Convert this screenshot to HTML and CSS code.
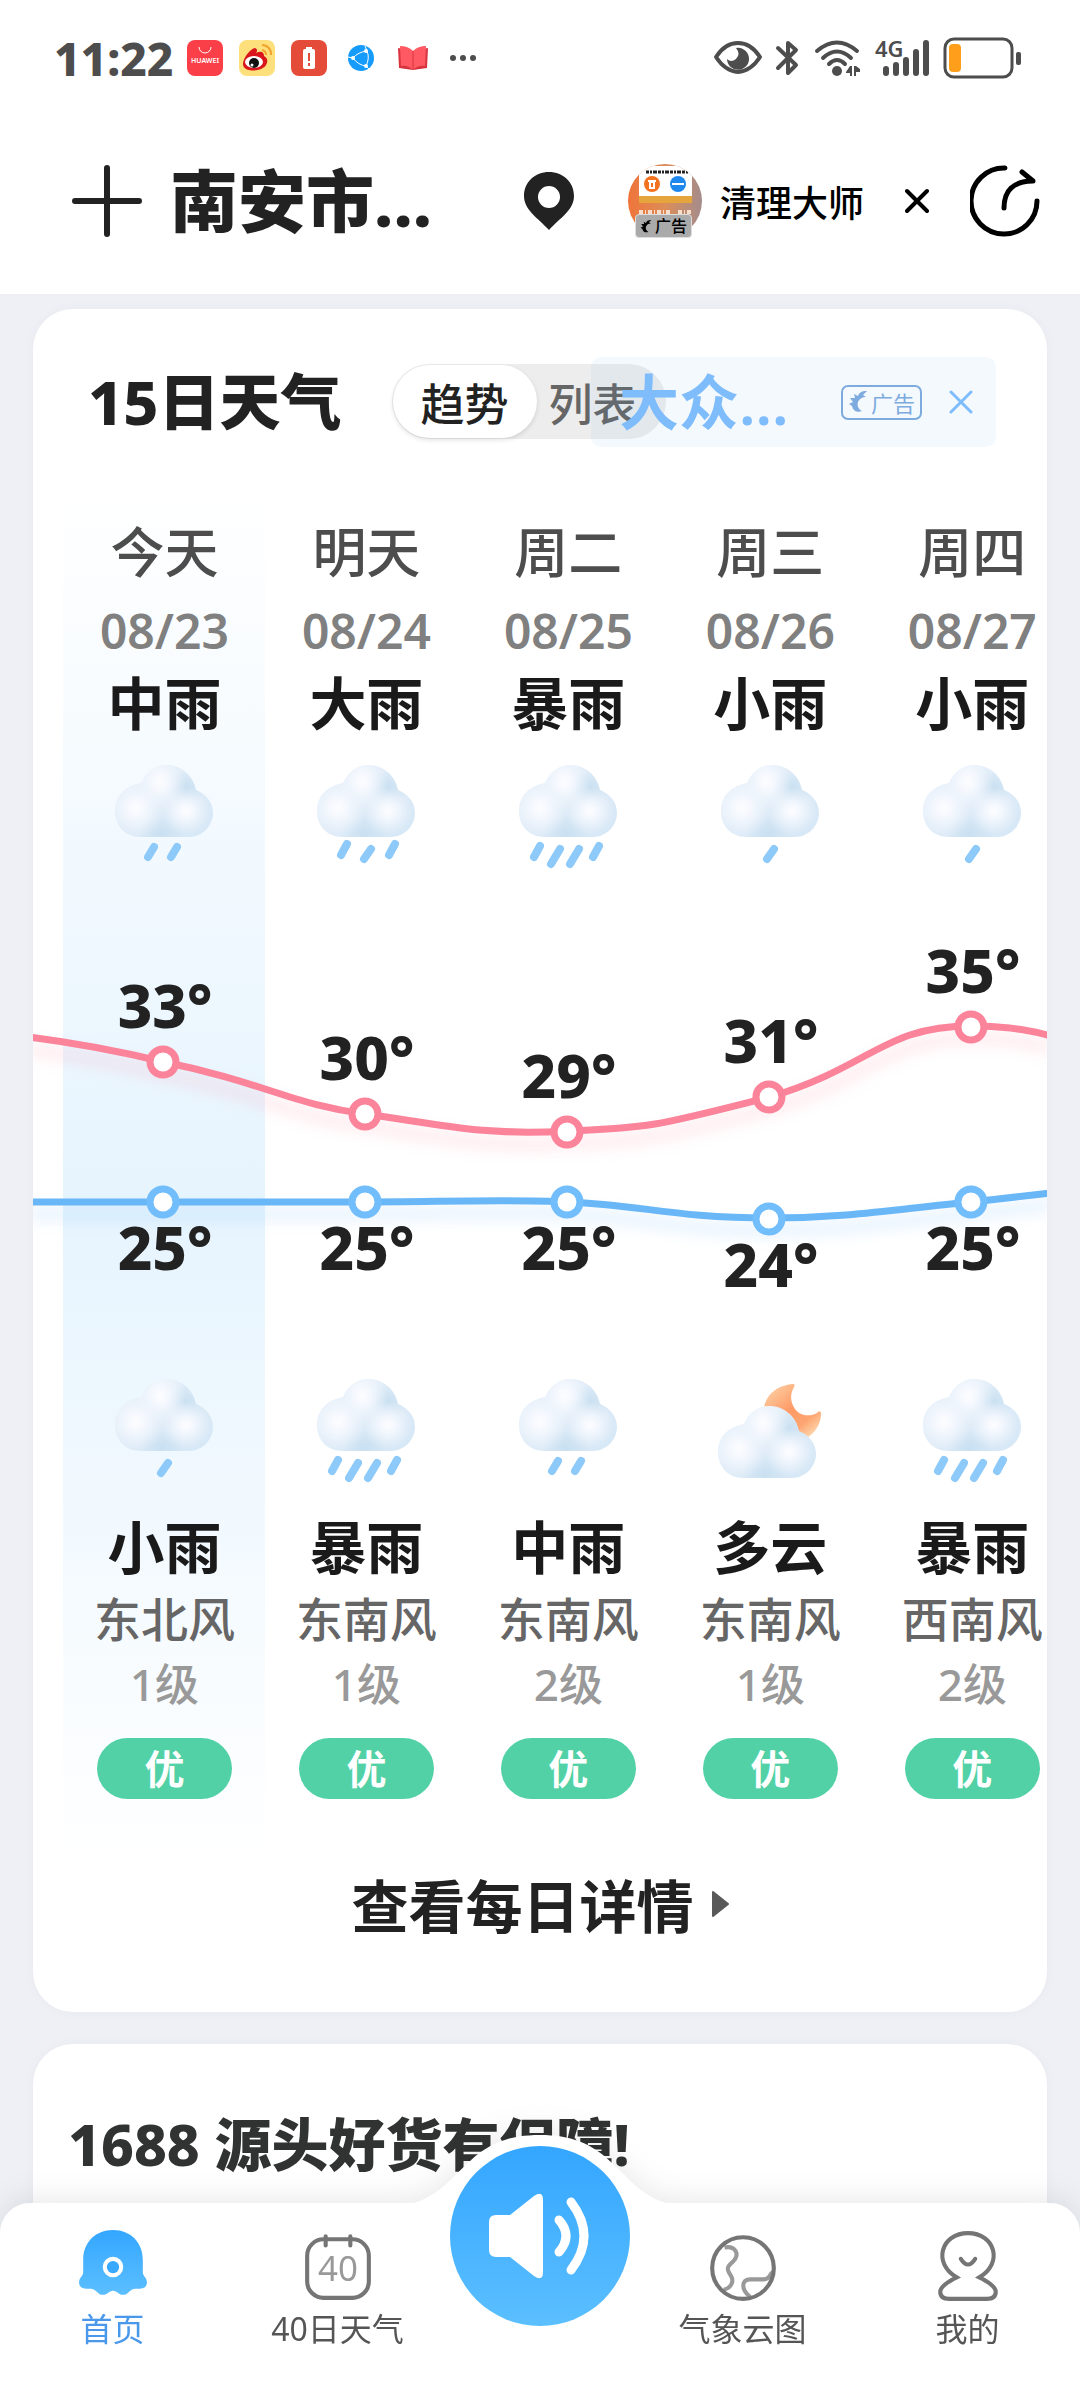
FILE: index.html
```html
<!DOCTYPE html>
<html lang="zh-CN">
<head>
  <meta charset="UTF-8">
  <meta name="viewport" content="width=device-width, initial-scale=1.0">
  <title>15日天气</title>
  <link rel="stylesheet" href="styles.css">
</head>
<body>
  <!-- shared weather icons -->
  <svg class="defs" width="0" height="0" aria-hidden="true">
    <defs>
      <linearGradient id="cloudBase" x1="0" y1="0" x2="1" y2="1">
        <stop offset="0" stop-color="#eef4fc"/>
        <stop offset="0.5" stop-color="#deebf7"/>
        <stop offset="1" stop-color="#d3e6f6"/>
      </linearGradient>
      <radialGradient id="puff">
        <stop offset="0" stop-color="#fdfdff"/>
        <stop offset="0.35" stop-color="#f8faff" stop-opacity="0.8"/>
        <stop offset="1" stop-color="#f0f5fc" stop-opacity="0"/>
      </radialGradient>
      <radialGradient id="shade">
        <stop offset="0" stop-color="#c9e0f1"/>
        <stop offset="1" stop-color="#c9e0f1" stop-opacity="0"/>
      </radialGradient>
      <linearGradient id="moonFill" x1="0" y1="0" x2="0.9" y2="1">
        <stop offset="0" stop-color="#fdd9ae"/>
        <stop offset="0.5" stop-color="#ff9a66"/>
        <stop offset="0.75" stop-color="#fda571"/>
        <stop offset="1" stop-color="#ffe0b8"/>
      </linearGradient>
      <linearGradient id="blueFill" x1="0" y1="0" x2="0" y2="1">
        <stop offset="0" stop-color="#34a6ff"/>
        <stop offset="1" stop-color="#5bbfff"/>
      </linearGradient>
      <clipPath id="cloudClip">
        <path d="M37 81C21 81 11 70 11 55C11 40 21 30 37 27C42 16 51 9 62 9C77 9 89 19 92 34C102 38 109 46 109 57C109 70 98 81 85 81Z"/>
      </clipPath>
    </defs>
    <symbol id="cloud" viewBox="0 0 120 120">
      <g clip-path="url(#cloudClip)">
        <rect width="120" height="90" fill="url(#cloudBase)"/>
        <ellipse cx="58" cy="78" rx="24" ry="20" fill="url(#shade)"/>
        <ellipse cx="82" cy="32" rx="20" ry="18" fill="url(#shade)"/>
        <ellipse cx="56" cy="26" rx="26" ry="30" fill="url(#puff)"/>
        <ellipse cx="32" cy="52" rx="29" ry="30" fill="url(#puff)"/>
        <ellipse cx="82" cy="55" rx="25" ry="24" fill="url(#puff)"/>
      </g>
    </symbol>
    <symbol id="rain1" viewBox="0 0 120 120">
      <use href="#cloud"/>
      <path class="drops" d="M64 93L57 103"/>
    </symbol>
    <symbol id="rain2" viewBox="0 0 120 120">
      <use href="#cloud"/>
      <path class="drops" d="M50 91L44 101M73 91L67 101"/>
    </symbol>
    <symbol id="rain3" viewBox="0 0 120 120">
      <use href="#cloud"/>
      <path class="drops" d="M41 88L35 99M65 93L58 103M89 88L83 99"/>
    </symbol>
    <symbol id="rain4" viewBox="0 0 120 120">
      <use href="#cloud"/>
      <path class="drops" d="M32 90L26 101M52 93L43 108M71 93L62 108M91 90L85 101"/>
    </symbol>
    <symbol id="cloudyNight" viewBox="0 0 120 120">
      <path fill="url(#moonFill)" d="M83 14C68 15 56 24 54 38L60 60L98 67C106 62 111 53 111 44C111 41 109 41 107 43C100 47 90 46 85 39C80 32 80 24 84 17C85 15 85 14 83 14Z"/>
      <use href="#cloud" transform="translate(-3 27)"/>
    </symbol>
    <symbol id="adLeaf" viewBox="0 0 20 24">
      <path fill="currentColor" d="M19 1C13 1 11 3 10 6L6 4L7 8L2 8L5 12L1 14L4 16C5 21 9 23 14 21C10 19 9 15 10 12C12 8 15 7 18 7L15 5Z"/>
    </symbol>
  </svg>

  <header class="topbar">
    <div class="status">
      <time class="clock">11:22</time>
      <div class="notices">
        <svg viewBox="0 0 36 36" aria-hidden="true">
          <rect width="36" height="36" rx="8" fill="#fb3f49"/>
          <path d="M12 7a6 6 0 0 0 12 0" fill="none" stroke="#fff" stroke-width="1"/>
          <text class="huawei" x="18" y="23">HUAWEI</text>
        </svg>
        <svg viewBox="0 0 36 36" aria-hidden="true">
          <rect width="36" height="36" rx="8" fill="#fde07c"/>
          <path fill="#d9141b" d="M4 24C4 18 12 8 16 8C19 9 18 12 17 13C21 11 25 11 25 16C29 18 29 22 27 25C23 32 4 33 4 24Z"/>
          <ellipse cx="15" cy="22" rx="9" ry="6" fill="#fff"/>
          <circle cx="15" cy="23" r="5" fill="#111"/>
          <circle cx="13" cy="25" r="1.5" fill="#fff"/>
          <path d="M23 5a9 9 0 0 1 9 10M23 10a5 5 0 0 1 4 5" fill="none" stroke="#f3a42c" stroke-width="2"/>
        </svg>
        <svg viewBox="0 0 36 36" aria-hidden="true">
          <rect width="36" height="36" rx="8" fill="#e44c39"/>
          <rect x="12" y="9" width="12" height="20" rx="2" fill="#fff"/>
          <rect x="15" y="7" width="6" height="3" fill="#fff"/>
          <path d="M18 13v8M18 23v3" stroke="#e44c39" stroke-width="2"/>
        </svg>
        <svg viewBox="0 0 36 36" aria-hidden="true">
          <circle cx="18" cy="18" r="13" fill="#149bfb"/>
          <path d="M10 18Q15 12 24 11M10 18Q15 25 23 26M24 11Q27 18 23 26M10 18L5 17M24 11L22 6M23 26L26 29" fill="none" stroke="#fff" stroke-width="1"/>
          <circle cx="10" cy="18" r="2" fill="#fff"/><circle cx="23" cy="11" r="2" fill="#fff"/><circle cx="23" cy="26" r="2" fill="#fff"/>
        </svg>
        <svg viewBox="0 0 36 36" aria-hidden="true">
          <path fill="#d8343f" d="M3 8L18 11L33 8L32 28L18 30L4 28Z"/>
          <path fill="#ff5a63" d="M5 6Q13 6 18 11Q23 6 31 6L30 26Q23 25 18 30Q13 25 6 26Z"/>
          <path d="M18 11V30" stroke="#d8343f" stroke-width="1"/>
        </svg>
        <svg viewBox="0 0 36 36" aria-hidden="true" fill="#4d4d4d">
          <circle cx="6" cy="18" r="3"/><circle cx="16" cy="18" r="3"/><circle cx="26" cy="18" r="3"/>
        </svg>
      </div>
      <div class="signals">
        <svg width="48" height="40" viewBox="0 0 48 40" aria-hidden="true">
          <path d="M2 19Q11 5 24 5Q37 5 46 19Q37 33 24 34Q11 33 2 19Z" fill="none" stroke="#4d4d4d" stroke-width="4" stroke-linejoin="round"/>
          <path fill="#4d4d4d" d="M22 10A11 11 0 1 1 13 21Q17 25 22 21Q27 16 22 10Z"/>
        </svg>
        <svg width="24" height="40" viewBox="0 0 24 40" aria-hidden="true">
          <path d="M2 10L20 27L12 35V5L20 12L2 30" fill="none" stroke="#4d4d4d" stroke-width="4" stroke-linejoin="round" stroke-linecap="round"/>
        </svg>
        <svg width="47" height="40" viewBox="0 0 47 40" aria-hidden="true">
          <path d="M3 13Q23-4 43 13M9 20Q23 7 37 20M15 26Q23 18 31 26" fill="none" stroke="#4d4d4d" stroke-width="4" stroke-linecap="round"/>
          <circle cx="23" cy="33" r="5" fill="#4d4d4d"/>
          <path fill="#4d4d4d" d="M32 34L36 28H38V38H36V35H32ZM40 28H42L46 31V34H42V38H40Z"/>
        </svg>
        <svg width="54" height="40" viewBox="0 0 54 40" aria-hidden="true">
          <text class="net" x="0" y="19">4G</text>
          <path d="M11 31V35M21 27V35M31 22V35M41 14V35M51 5V35" fill="none" stroke="#4d4d4d" stroke-width="6" stroke-linecap="round"/>
        </svg>
        <svg width="78" height="42" viewBox="0 0 78 42" aria-hidden="true">
          <rect x="2" y="2" width="67" height="38" rx="9" fill="none" stroke="#4d4d4d" stroke-width="3"/>
          <rect x="6" y="7" width="12" height="28" rx="4" fill="#ff9e1b"/>
          <rect x="73" y="15" width="5" height="13" rx="2" fill="#4d4d4d"/>
        </svg>
      </div>
    </div>

    <div class="titlebar">
      <button class="icon-btn" type="button" aria-label="添加城市">
        <svg width="70" height="72" viewBox="0 0 70 72"><path d="M3 36H67M35 3V69" stroke="#222" stroke-width="6" stroke-linecap="round"/></svg>
      </button>
      <h1>南安市...</h1>
      <svg class="pin" width="50" height="58" viewBox="0 0 50 58" aria-hidden="true">
        <path fill="#222" fill-rule="evenodd" d="M25 0C39 0 50 10 50 24C50 38 36 46 25 58C14 46 0 38 0 24C0 10 11 0 25 0ZM25 14A11 11 0 1 0 25 36A11 11 0 1 0 25 14Z"/>
      </svg>
      <a class="promo" href="#">
        <span class="avatar">
          <svg width="74" height="74" viewBox="0 0 74 74" aria-hidden="true">
            <defs>
              <linearGradient id="avatarFill" x1="0" y1="0" x2="1" y2="0">
                <stop offset="0" stop-color="#f0743a"/>
                <stop offset="0.5" stop-color="#dc8d58"/>
                <stop offset="1" stop-color="#a48c8c"/>
              </linearGradient>
              <clipPath id="avatarClip"><circle cx="37" cy="37" r="37"/></clipPath>
            </defs>
            <g clip-path="url(#avatarClip)">
              <rect width="74" height="74" fill="url(#avatarFill)"/>
              <rect x="11" y="2" width="53" height="30" fill="#fff"/>
              <rect x="11" y="32" width="53" height="7" fill="#e5a53c"/>
              <path d="M18 8H60" stroke="#222" stroke-width="3" stroke-dasharray="3 1 2 1 4 1"/>
              <path d="M11 48H43M50 48H65" stroke="#f7ddcc" stroke-width="4" stroke-dasharray="4 2 1 2"/>
              <circle cx="24" cy="20" r="8" fill="#f4731f"/>
              <circle cx="50" cy="20" r="8" fill="#1e88ee"/>
              <path d="M20 17h8M22 18h4v6h-4zM44 20h12" fill="none" stroke="#fff" stroke-width="2"/>
            </g>
          </svg>
          <span class="avatar-tag"><svg width="12" height="15"><use href="#adLeaf"/></svg>广告</span>
        </span>
        <span>清理大师</span>
      </a>
      <button class="icon-btn close" type="button" aria-label="关闭广告">
        <svg width="24" height="26" viewBox="0 0 24 26"><path d="M2 3L22 23M22 3L2 23" stroke="#000" stroke-width="4" stroke-linecap="round"/></svg>
      </button>
      <button class="icon-btn" type="button" aria-label="分享">
        <svg width="70" height="72" viewBox="0 0 70 72" fill="none" stroke="#000" stroke-width="5" stroke-linecap="round" stroke-linejoin="round">
          <path d="M35 3A33 33 0 1 0 67 36M34 43C34 26 43 16 63 16L52 7"/>
        </svg>
      </button>
    </div>
  </header>

  <main>
    <section class="card">
      <div class="card-head">
        <h2>15日天气</h2>
        <div class="toggle">
          <button class="active" type="button">趋势</button>
          <button type="button">列表</button>
        </div>
        <div class="banner">
          <a href="#">大众...</a>
          <span class="ad-tag"><svg width="20" height="24"><use href="#adLeaf"/></svg>广告</span>
          <button class="icon-btn" type="button" aria-label="关闭">
            <svg width="24" height="24" viewBox="0 0 24 24"><path d="M2 2L22 22M22 2L2 22" stroke="#7ebcfb" stroke-width="3" stroke-linecap="round"/></svg>
          </button>
        </div>
      </div>

      <div class="forecast">
        <table>
          <thead>
            <tr class="day"><th>今天</th><th>明天</th><th>周二</th><th>周三</th><th>周四</th></tr>
          </thead>
          <tbody>
            <tr class="date"><td>08/23</td><td>08/24</td><td>08/25</td><td>08/26</td><td>08/27</td></tr>
            <tr class="weather"><td>中雨</td><td>大雨</td><td>暴雨</td><td>小雨</td><td>小雨</td></tr>
            <tr class="icons">
              <td><svg><use href="#rain2"/></svg></td>
              <td><svg><use href="#rain3"/></svg></td>
              <td><svg><use href="#rain4"/></svg></td>
              <td><svg><use href="#rain1"/></svg></td>
              <td><svg><use href="#rain1"/></svg></td>
            </tr>
            <tr>
              <td colspan="5">
                <svg class="chart" viewBox="0 0 1010 454">
                  <path class="line high" d="M-34 141C20 148 60 156 101 166C200 186 230 209 303 218C380 229 420 240 505 235C590 232 600 228 707 201C810 170 820 130 909 130C940 130 965 133 988 140"/>
                  <path class="line low" d="M-34 306H303C370 306 450 303 505 306C580 309 610 322 707 322C790 322 840 312 909 306L988 297"/>
                  <g class="dots-high">
                    <circle cx="100" cy="166" r="13"/><circle cx="302" cy="218" r="13"/><circle cx="504" cy="236" r="13"/><circle cx="706" cy="201" r="13"/><circle cx="908" cy="131" r="13"/>
                  </g>
                  <g class="dots-low">
                    <circle cx="100" cy="306" r="13"/><circle cx="302" cy="306" r="13"/><circle cx="504" cy="306" r="13"/><circle cx="706" cy="323" r="13"/><circle cx="908" cy="306" r="13"/>
                  </g>
                  <g class="temps">
                    <text x="102" y="132">33°</text><text x="304" y="184">30°</text><text x="506" y="202">29°</text><text x="708" y="167">31°</text><text x="910" y="97">35°</text>
                    <text x="102" y="374">25°</text><text x="304" y="374">25°</text><text x="506" y="374">25°</text><text x="708" y="391">24°</text><text x="910" y="374">25°</text>
                  </g>
                </svg>
              </td>
            </tr>
            <tr class="icons">
              <td><svg><use href="#rain1"/></svg></td>
              <td><svg><use href="#rain4"/></svg></td>
              <td><svg><use href="#rain2"/></svg></td>
              <td><svg><use href="#cloudyNight"/></svg></td>
              <td><svg><use href="#rain4"/></svg></td>
            </tr>
            <tr class="weather night"><td>小雨</td><td>暴雨</td><td>中雨</td><td>多云</td><td>暴雨</td></tr>
            <tr class="wind"><td>东北风</td><td>东南风</td><td>东南风</td><td>东南风</td><td>西南风</td></tr>
            <tr class="level"><td>1级</td><td>1级</td><td>2级</td><td>1级</td><td>2级</td></tr>
            <tr class="air"><td><span>优</span></td><td><span>优</span></td><td><span>优</span></td><td><span>优</span></td><td><span>优</span></td></tr>
          </tbody>
        </table>
      </div>

      <a class="more" href="#">查看每日详情
        <svg width="17" height="26" viewBox="0 0 17 26" aria-hidden="true"><path d="M1 1L16 13L1 25Z" fill="#595959" stroke="#595959" stroke-width="2" stroke-linejoin="round"/></svg>
      </a>
    </section>

    <section class="card goods">
      <h2>1688 源头好货有保障!</h2>
    </section>
  </main>

  <nav class="tabbar">
    <svg class="bump" viewBox="0 0 260 70" aria-hidden="true">
      <path fill="#fff" d="M0 70L4 68C30 60 42 42 58 28C78 8 100 0 130 0C160 0 182 8 202 28C218 42 230 60 256 68L260 70Z"/>
    </svg>
    <a class="current" href="#">
      <svg viewBox="0 0 72 72">
        <path fill="url(#blueFill)" d="M36 2C53 2 65 14 65 31V43C65 47 69 48 69 53C69 57 66 59 62 59H58C52 59 51 65 46 65C41 65 40 61 36 61C32 61 31 65 26 65C21 65 20 59 14 59H10C6 59 3 57 3 53C3 48 7 47 7 43V31C7 14 19 2 36 2Z"/>
        <circle cx="36" cy="38" r="8" fill="#39a8ff" stroke="#fff" stroke-width="4"/>
      </svg>
      <span>首页</span>
    </a>
    <a href="#">
      <svg viewBox="0 0 72 72">
        <rect x="6" y="11" width="60" height="57" rx="16" fill="none" stroke="#757575" stroke-width="4"/>
        <path d="M24 8V17M48 8V17" stroke="#757575" stroke-width="4" stroke-linecap="round"/>
        <text class="cal" x="36" y="52">40</text>
      </svg>
      <span>40日天气</span>
    </a>
    <button class="speaker" type="button" aria-label="播放天气">
      <svg viewBox="0 0 180 180">
        <path fill="#fff" d="M39 76Q39 69 46 69H60L84 50Q93 44 93 54V126Q93 136 84 130L60 111H46Q39 111 39 104Z"/>
        <path d="M109 74Q123 90 109 106M121 56Q147 90 121 124" fill="none" stroke="#fff" stroke-width="9" stroke-linecap="round"/>
      </svg>
    </button>
    <a href="#">
      <svg viewBox="0 0 72 72" fill="none" stroke-width="4">
        <path stroke="#999" d="M18 19C28 17 34 25 26 33C20 38 20 40 24 46C28 52 24 59 17 60M66 43C61 43 64 50 56 50H43C34 50 34 60 43 67"/>
        <circle cx="36" cy="39" r="30" stroke="#757575"/>
      </svg>
      <span>气象云图</span>
    </a>
    <a href="#">
      <svg viewBox="0 0 72 72" fill="none" stroke="#757575" stroke-width="4">
        <path d="M25 48C1 34 10 5 36 5C62 5 71 34 47 48C55 52 63 57 63 62Q63 69 54 69H18Q9 69 9 62C9 57 17 52 25 48Z"/>
        <path d="M29 30Q36 41 43 30" stroke-linecap="round"/>
      </svg>
      <span>我的</span>
    </a>
  </nav>
</body>
</html>
```
FILE: styles.css
```css
* {
  box-sizing: border-box;
}

body {
  margin: 0;
  min-height: 100vh;
  display: flex;
  flex-direction: column;
  background-color: #eef0f5;
  color: #222;
  font-family: "Noto Sans", "Noto Sans CJK SC", sans-serif;
}

h1, h2 {
  margin: 0;
  font-weight: 800;
}

a {
  color: inherit;
  text-decoration: none;
}

button {
  padding: 0;
  border: none;
  background: none;
  font-family: inherit;
  cursor: pointer;
}

svg {
  display: block;
}

.defs {
  position: absolute;
}

/* status bar and title bar */
.topbar {
  background-color: #fff;
  padding-bottom: 8px;
}

.status {
  display: flex;
  align-items: center;
  height: 116px;
  padding: 0 59px 0 54px;
}

.clock {
  color: #4d4d4d;
  font-size: 46px;
  font-weight: 800;
  line-height: 60px;
}

.notices {
  display: flex;
  gap: 16px;
  margin-left: 14px;
}

.notices svg {
  width: 36px;
  height: 36px;
}

.huawei {
  fill: #fff;
  font-size: 7px;
  font-weight: 600;
  text-anchor: middle;
}

.signals {
  display: flex;
  align-items: center;
  gap: 14px;
  margin-left: auto;
}

.signals svg {
  overflow: visible;
}

.net {
  fill: #4d4d4d;
  font-size: 22px;
  font-weight: 600;
}

.titlebar {
  display: flex;
  align-items: center;
  height: 170px;
  padding: 0 40px 0 72px;
}

.titlebar h1 {
  margin-left: 28px;
  font-size: 68px;
  line-height: 80px;
  white-space: nowrap;
}

.pin {
  margin-left: 92px;
}

.promo {
  display: flex;
  align-items: center;
  gap: 18px;
  margin-left: auto;
  color: #000;
  font-size: 36px;
  font-weight: 500;
}

.avatar {
  position: relative;
}

.avatar-tag {
  position: absolute;
  left: 7px;
  bottom: 0;
  display: flex;
  align-items: center;
  gap: 3px;
  padding: 0 4px;
  border: 1px solid #ddd;
  border-radius: 4px;
  background-color: #aaa;
  font-size: 16px;
  line-height: 22px;
  white-space: nowrap;
}

.close {
  margin: 0 41px;
}

/* cards */
main {
  flex: 1;
  display: flex;
  flex-direction: column;
  gap: 32px;
  padding: 15px 33px 0;
}

.card {
  border-radius: 40px;
  background-color: #fff;
  box-shadow: 0 0 12px rgba(0, 0, 0, 0.03);
  overflow: hidden;
}

.card-head {
  position: relative;
  display: flex;
  align-items: center;
  gap: 50px;
  height: 137px;
  padding: 48px 51px 0 55px;
}

.card-head h2 {
  font-size: 61px;
  line-height: 80px;
  white-space: nowrap;
}

.toggle {
  display: flex;
  width: 274px;
  padding: 1px;
  border-radius: 38px;
  background-color: #ededed;
}

.toggle button {
  width: 112px;
  height: 73px;
  border-radius: 37px;
  color: #666;
  font-size: 44px;
  font-weight: 500;
}

.toggle .active {
  width: 144px;
  background-color: #fff;
  box-shadow: 0 2px 5px rgba(0, 0, 0, 0.12);
  color: #222;
}

/* sits over the end of the toggle */
.banner {
  position: absolute;
  top: 48px;
  right: 51px;
  display: flex;
  align-items: center;
  width: 405px;
  height: 90px;
  padding: 0 23px 0 28px;
  border-radius: 10px;
  background-color: rgba(64, 158, 245, 0.06);
  color: #7ebcfb;
}

.banner a {
  font-size: 60px;
  font-weight: 600;
  line-height: 80px;
}

.ad-tag {
  display: flex;
  align-items: center;
  gap: 3px;
  height: 35px;
  margin: 0 27px 0 auto;
  padding: 0 5px;
  border: 2px solid #7dabde;
  border-radius: 7px;
  color: #7dabde;
  font-size: 22px;
}

/* forecast, the fifth column runs past the card edge */
.forecast {
  width: 99.6%;
  margin: 40px 0 0 3%;
  padding-bottom: 40px;
  background: linear-gradient(#fff, #e6f4fe 52%, #fff) no-repeat left / 20% 100%;
}

table {
  width: 100%;
  border-collapse: collapse;
  table-layout: fixed;
}

th, td {
  padding: 0;
  text-align: center;
  white-space: nowrap;
}

.day th {
  height: 106px;
  padding-top: 26px;
  color: #4d4d4d;
  font-size: 54px;
  font-weight: 500;
  line-height: 80px;
}

.date td {
  height: 78px;
  color: #808080;
  font-size: 48px;
  font-weight: 600;
  line-height: 78px;
}

.weather td {
  height: 66px;
  color: #1a1a1a;
  font-size: 57px;
  font-weight: 600;
  line-height: 66px;
}

.night td {
  height: 74px;
}

.icons td {
  height: 160px;
}

.icons svg {
  width: 120px;
  height: 120px;
  margin: 0 auto;
}

.drops {
  fill: none;
  stroke: #8dcafa;
  stroke-width: 8px;
  stroke-linecap: round;
}

.wind td {
  height: 70px;
  color: #666;
  font-size: 47px;
  font-weight: 500;
  line-height: 70px;
}

.level td {
  height: 60px;
  color: #999;
  font-size: 44px;
  font-weight: 500;
  line-height: 60px;
}

.air td {
  height: 110px;
}

.air span {
  display: block;
  width: 135px;
  margin: 0 auto;
  border-radius: 31px;
  background-color: #53d1a6;
  color: #fff;
  font-size: 40px;
  font-weight: 700;
  line-height: 61px;
}

/* temperature chart */
.chart {
  width: 100%;
  overflow: visible;
}

.line {
  fill: none;
  stroke-width: 7px;
}

.high {
  stroke: #fb849b;
  filter: drop-shadow(0 12px 8px rgba(251, 132, 155, 0.3));
}

.low {
  stroke: #6ab7f8;
  filter: drop-shadow(0 12px 8px rgba(106, 183, 248, 0.3));
}

.dots-high, .dots-low {
  fill: #fff;
  stroke: #fb849b;
  stroke-width: 7px;
}

.dots-low {
  stroke: #72bdfb;
}

.temps {
  fill: #222;
  font-size: 60px;
  font-weight: 800;
  text-anchor: middle;
}

.more {
  display: flex;
  align-items: center;
  justify-content: center;
  gap: 18px;
  height: 80px;
  margin-bottom: 68px;
  font-size: 57px;
  font-weight: 700;
}

.goods {
  flex: 1;
  padding: 60px 35px 0;
  border-radius: 40px 40px 0 0;
}

.goods h2 {
  color: #303332;
  font-size: 57px;
  line-height: 80px;
}

/* bottom tabs */
.tabbar {
  position: fixed;
  left: 0;
  right: 0;
  bottom: 0;
  display: grid;
  grid-template-columns: 1fr 1fr 180px 1fr 1fr;
  height: 185px;
  border-radius: 30px 30px 0 0;
  background-color: #fff;
  filter: drop-shadow(0 -6px 14px rgba(0, 0, 0, 0.08));
}

.tabbar a {
  display: flex;
  flex-direction: column;
  align-items: center;
  gap: 4px;
  padding-top: 25px;
  color: #555;
  font-size: 32px;
  line-height: 46px;
}

.tabbar a svg {
  width: 74px;
  height: 74px;
}

.tabbar .current {
  color: #4a98ea;
}

.cal {
  fill: #999;
  font-size: 34px;
  text-anchor: middle;
}

.bump {
  position: absolute;
  left: 50%;
  bottom: 100%;
  width: 260px;
  margin: 0 0 -2px -130px;
}

.speaker {
  position: relative;
  height: 180px;
  margin-top: -57px;
  border-radius: 50%;
  background: linear-gradient(#34a6ff, #5bbfff);
}
```
